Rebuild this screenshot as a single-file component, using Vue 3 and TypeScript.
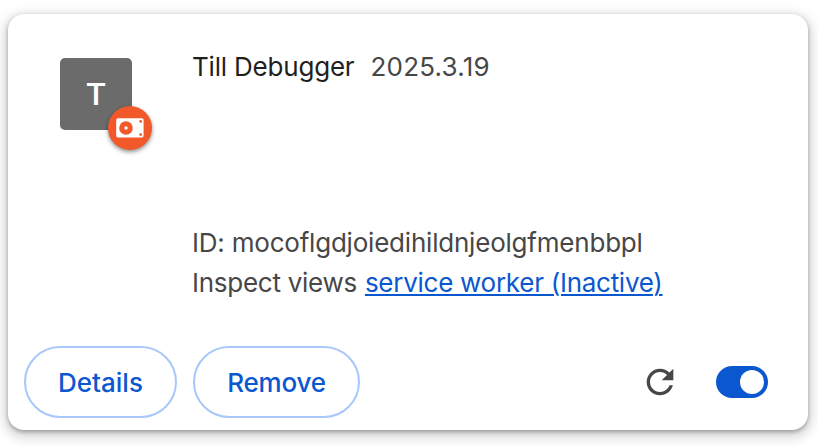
<script setup lang="ts">
import { ref } from 'vue'

const extension = {
  name: 'Till Debugger',
  version: '2025.3.19',
  id: 'mocoflgdjoiedihildnjeolgfmenbbpl',
}
const enabled = ref(true)
</script>

<template>
  <main class="page">
    <article class="card">
      <div class="info">
        <div class="icon">
          <span class="letter">T</span>
          <div class="badge">
            <svg width="44" height="44" viewBox="0 0 44 44">
              <rect x="8.2" y="12.2" width="27.4" height="19.4" rx="1.8" fill="#fff" />
              <circle cx="18" cy="22" r="6.8" fill="#f1592a" />
              <circle cx="18" cy="22" r="1.7" fill="#fff" />
              <circle cx="32.7" cy="15.4" r="1.4" fill="#f1592a" />
              <circle cx="32.7" cy="28.6" r="1.4" fill="#f1592a" />
            </svg>
          </div>
        </div>
        <div class="content">
          <div class="heading">
            <span class="name">{{ extension.name }}</span>
            <span class="version">{{ extension.version }}</span>
          </div>
          <div class="ident">ID: {{ extension.id }}</div>
          <div class="views">
            <span class="label">Inspect views</span>
            <a class="link">service worker (Inactive)</a>
          </div>
        </div>
      </div>
      <div class="actions">
        <button class="btn details"><span>Details</span></button>
        <button class="btn remove"><span>Remove</span></button>
        <svg class="reload" width="40" height="40" viewBox="0 0 24 24">
          <path
            fill="#474747"
            d="M17.65 6.35C16.2 4.9 14.21 4 12 4c-4.42 0-7.99 3.58-7.99 8s3.57 8 7.99 8c3.73 0 6.84-2.55 7.73-6h-2.08c-.82 2.33-3.04 4-5.65 4-3.31 0-6-2.69-6-6s2.69-6 6-6c1.66 0 3.14.69 4.22 1.78L13 11h7V4l-2.35 2.35z"
          />
        </svg>
        <button
          class="toggle"
          :class="{ on: enabled }"
          role="switch"
          :aria-checked="enabled"
          @click="enabled = !enabled"
        >
          <span class="knob"></span>
        </button>
      </div>
    </article>
  </main>
</template>

<style>
body {
  background: #fff;
}
</style>

<style scoped>
.page {
  box-sizing: border-box;
  height: 446px;
  padding: 14px 10px 16px 8px;
  overflow: hidden;
  font-family: Inter, 'Liberation Sans', sans-serif;
  font-size: 26px;
  line-height: 40px;
  color: #474747;
  white-space: nowrap;
}
.card {
  box-sizing: border-box;
  height: 416px;
  border-radius: 16px;
  background: #fff;
  display: flex;
  flex-direction: column;
  box-shadow:
    0 2px 4px rgba(0, 0, 0, 0.3),
    0 4px 12px 4px rgba(0, 0, 0, 0.15);
}
.info {
  flex: 1;
  display: flex;
  padding: 33px 40px 0 52px;
}
.icon {
  position: relative;
  width: 72px;
  height: 72px;
  margin: 11px 60px 0 0;
  border-radius: 5px;
  background: #6b6b6b;
  display: flex;
  align-items: center;
  justify-content: center;
}
.letter {
  color: #fff;
  font-family: Roboto, sans-serif;
  font-size: 32px;
  font-weight: 500;
  line-height: 32px;
}
.badge {
  position: absolute;
  left: 48px;
  top: 48px;
  width: 44px;
  height: 44px;
  border-radius: 50%;
  background: #f1592a;
  box-shadow: 0 2px 4px rgba(0, 0, 0, 0.45);
}
.badge svg {
  display: block;
}
.content {
  display: flex;
  flex-direction: column;
}
.heading {
  display: flex;
  gap: 16px;
  margin-bottom: 136px;
}
.name {
  color: #1f1f1f;
  letter-spacing: -0.2px;
}
.version {
  letter-spacing: 0.22px;
}
.ident {
  letter-spacing: -0.21px;
}
.views {
  display: flex;
  gap: 8px;
}
.label {
  letter-spacing: -0.27px;
}
.link {
  color: #0b57d0;
  letter-spacing: -0.27px;
  text-decoration: underline;
  text-decoration-thickness: 2px;
  text-underline-offset: 2px;
}
.actions {
  display: flex;
  align-items: center;
  padding: 0 40px 12px 16px;
}
.btn {
  box-sizing: border-box;
  height: 72px;
  padding: 2px 0 0;
  margin-right: 16px;
  border: 2px solid #a8c7fa;
  border-radius: 36px;
  background: none;
  color: #0b57d0;
  font: 500 26px/40px Inter, 'Liberation Sans', sans-serif;
}
.details {
  width: 153px;
}
.remove {
  width: 167px;
  letter-spacing: -0.2px;
}
.reload {
  margin-left: auto;
  margin-right: 36px;
}
.toggle {
  box-sizing: border-box;
  width: 52px;
  height: 32px;
  padding: 4px;
  border: 0;
  border-radius: 16px;
  background: #c7c7c7;
  display: flex;
}
.toggle.on {
  background: #0b57d0;
  justify-content: flex-end;
}
.knob {
  width: 24px;
  height: 24px;
  border-radius: 50%;
  background: #fff;
}
</style>
